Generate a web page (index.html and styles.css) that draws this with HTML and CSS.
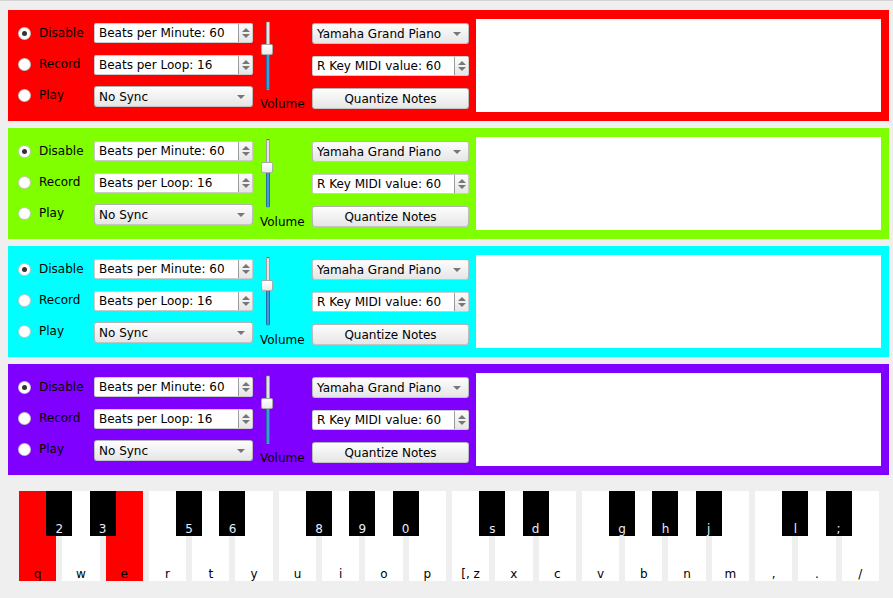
FILE: index.html
```html
<!DOCTYPE html>
<html>
<head>
<meta charset="utf-8">
<link rel="stylesheet" href="styles.css">
</head>
<body>
<div class="panels">
  <div class="panel red">
    <div class="radios">
      <div class="radio"><span class="dot on"></span>Disable</div>
      <div class="radio"><span class="dot"></span>Record</div>
      <div class="radio"><span class="dot"></span>Play</div>
    </div>
    <div class="col col2">
      <div class="spin"><span class="val">Beats per Minute: 60</span><span class="arrows"><i class="up"></i><i class="dn"></i></span></div>
      <div class="spin s2"><span class="val">Beats per Loop: 16</span><span class="arrows"><i class="up"></i><i class="dn"></i></span></div>
      <div class="combo c3"><span>No Sync</span><i class="caret"></i></div>
    </div>
    <div class="slidercol">
      <div class="slider"><div class="groove"></div><div class="handle"></div></div>
      <div class="vol">Volume</div>
    </div>
    <div class="col col3">
      <div class="combo"><span>Yamaha Grand Piano</span><i class="caret"></i></div>
      <div class="spin s2b"><span class="val">R Key MIDI value: 60</span><span class="arrows"><i class="up"></i><i class="dn"></i></span></div>
      <div class="button">Quantize Notes</div>
    </div>
    <div class="textbox"></div>
  </div>

  <div class="panel green">
    <div class="radios">
      <div class="radio"><span class="dot on"></span>Disable</div>
      <div class="radio"><span class="dot"></span>Record</div>
      <div class="radio"><span class="dot"></span>Play</div>
    </div>
    <div class="col col2">
      <div class="spin"><span class="val">Beats per Minute: 60</span><span class="arrows"><i class="up"></i><i class="dn"></i></span></div>
      <div class="spin s2"><span class="val">Beats per Loop: 16</span><span class="arrows"><i class="up"></i><i class="dn"></i></span></div>
      <div class="combo c3"><span>No Sync</span><i class="caret"></i></div>
    </div>
    <div class="slidercol">
      <div class="slider"><div class="groove"></div><div class="handle"></div></div>
      <div class="vol">Volume</div>
    </div>
    <div class="col col3">
      <div class="combo"><span>Yamaha Grand Piano</span><i class="caret"></i></div>
      <div class="spin s2b"><span class="val">R Key MIDI value: 60</span><span class="arrows"><i class="up"></i><i class="dn"></i></span></div>
      <div class="button">Quantize Notes</div>
    </div>
    <div class="textbox"></div>
  </div>

  <div class="panel cyan">
    <div class="radios">
      <div class="radio"><span class="dot on"></span>Disable</div>
      <div class="radio"><span class="dot"></span>Record</div>
      <div class="radio"><span class="dot"></span>Play</div>
    </div>
    <div class="col col2">
      <div class="spin"><span class="val">Beats per Minute: 60</span><span class="arrows"><i class="up"></i><i class="dn"></i></span></div>
      <div class="spin s2"><span class="val">Beats per Loop: 16</span><span class="arrows"><i class="up"></i><i class="dn"></i></span></div>
      <div class="combo c3"><span>No Sync</span><i class="caret"></i></div>
    </div>
    <div class="slidercol">
      <div class="slider"><div class="groove"></div><div class="handle"></div></div>
      <div class="vol">Volume</div>
    </div>
    <div class="col col3">
      <div class="combo"><span>Yamaha Grand Piano</span><i class="caret"></i></div>
      <div class="spin s2b"><span class="val">R Key MIDI value: 60</span><span class="arrows"><i class="up"></i><i class="dn"></i></span></div>
      <div class="button">Quantize Notes</div>
    </div>
    <div class="textbox"></div>
  </div>

  <div class="panel purple">
    <div class="radios">
      <div class="radio"><span class="dot on"></span>Disable</div>
      <div class="radio"><span class="dot"></span>Record</div>
      <div class="radio"><span class="dot"></span>Play</div>
    </div>
    <div class="col col2">
      <div class="spin"><span class="val">Beats per Minute: 60</span><span class="arrows"><i class="up"></i><i class="dn"></i></span></div>
      <div class="spin s2"><span class="val">Beats per Loop: 16</span><span class="arrows"><i class="up"></i><i class="dn"></i></span></div>
      <div class="combo c3"><span>No Sync</span><i class="caret"></i></div>
    </div>
    <div class="slidercol">
      <div class="slider"><div class="groove"></div><div class="handle"></div></div>
      <div class="vol">Volume</div>
    </div>
    <div class="col col3">
      <div class="combo"><span>Yamaha Grand Piano</span><i class="caret"></i></div>
      <div class="spin s2b"><span class="val">R Key MIDI value: 60</span><span class="arrows"><i class="up"></i><i class="dn"></i></span></div>
      <div class="button">Quantize Notes</div>
    </div>
    <div class="textbox"></div>
  </div>
</div>

<div class="keyboard">
  <div class="key pressed">q<div class="black">2</div></div>
  <div class="key">w<div class="black">3</div></div>
  <div class="key pressed">e</div>
  <div class="key">r<div class="black">5</div></div>
  <div class="key">t<div class="black">6</div></div>
  <div class="key">y</div>
  <div class="key">u<div class="black">8</div></div>
  <div class="key">i<div class="black">9</div></div>
  <div class="key">o<div class="black">0</div></div>
  <div class="key">p</div>
  <div class="key">[, z<div class="black">s</div></div>
  <div class="key">x<div class="black">d</div></div>
  <div class="key">c</div>
  <div class="key">v<div class="black">g</div></div>
  <div class="key">b<div class="black">h</div></div>
  <div class="key">n<div class="black">j</div></div>
  <div class="key">m</div>
  <div class="key">,<div class="black">l</div></div>
  <div class="key">.<div class="black">;</div></div>
  <div class="key">/</div>
</div>
</body>
</html>
```

FILE: styles.css
```css
* { box-sizing: border-box; margin: 0; padding: 0; }
html, body { width: 893px; height: 598px; overflow: hidden; }
body {
  background: #efefef;
  font-family: "DejaVu Sans", "Liberation Sans", sans-serif;
  font-size: 12px;
  color: #000;
  border-top: 1px solid #d3d3d3;
}

.panels {
  display: flex;
  flex-direction: column;
  gap: 7px;
  padding: 9px 4px 0 8px;
}
.panel {
  height: 111px;
  display: flex;
  gap: 7px;
  padding: 9px 8px 9px 9px;
}
.red { background: #ff0000; }
.green { background: #80ff00; }
.cyan { background: #00ffff; }
.purple { background: #8000ff; }

.radios {
  width: 70px;
  display: flex;
  flex-direction: column;
  gap: 11px;
  padding: 4px 0 0 1px;
}
.radio {
  height: 20px;
  display: flex;
  align-items: center;
  gap: 8px;
  white-space: nowrap;
}
.dot {
  width: 13px;
  height: 13px;
  border-radius: 50%;
  background: #fff;
  border: 1px solid rgba(0, 0, 0, 0.22);
  display: flex;
  align-items: center;
  justify-content: center;
}
.dot.on::after {
  content: "";
  width: 5px;
  height: 5px;
  border-radius: 50%;
  background: #333;
}

.col {
  display: flex;
  flex-direction: column;
  padding-top: 4px;
}
.col2 { width: 159px; }
.col3 { width: 157px; }
.s2 { margin-top: 12px; }
.c3 { margin-top: 11px; }
.s2b { margin-top: 12px; }

.spin {
  height: 20px;
  display: flex;
  background: #fff;
  border: 1px solid rgba(0, 0, 0, 0.2);
  border-radius: 2px;
}
.spin .val {
  flex: 1;
  padding-left: 4px;
  line-height: 18px;
  white-space: nowrap;
  overflow: hidden;
}
.arrows {
  width: 14px;
  border-left: 1px solid rgba(0, 0, 0, 0.35);
  background: linear-gradient(#fbfbfb, #e6e6e6);
  display: flex;
  flex-direction: column;
  align-items: center;
  justify-content: center;
  gap: 2px;
}
.up {
  width: 0; height: 0;
  border-left: 4px solid transparent;
  border-right: 4px solid transparent;
  border-bottom: 4px solid #777;
}
.dn {
  width: 0; height: 0;
  border-left: 4px solid transparent;
  border-right: 4px solid transparent;
  border-top: 4px solid #777;
}

.combo, .button {
  height: 21px;
  background: linear-gradient(#fdfdfd, #e6e6e6);
  border: 1px solid rgba(0, 0, 0, 0.22);
  border-radius: 3px;
  white-space: nowrap;
}
.combo {
  display: flex;
  align-items: center;
  justify-content: space-between;
  padding: 0 7px 0 4px;
}
.caret {
  width: 0; height: 0;
  border-left: 4px solid transparent;
  border-right: 4px solid transparent;
  border-top: 4px solid #777;
}
.button {
  margin-top: 12px;
  display: flex;
  align-items: center;
  justify-content: center;
}

.slidercol {
  width: 45px;
  display: flex;
  flex-direction: column;
  padding-top: 2px;
}
.slider {
  position: relative;
  width: 14px;
  height: 69px;
}
.groove {
  margin-left: 6px;
  width: 4px;
  height: 69px;
  border-radius: 2px;
  border: 1px solid rgba(0, 0, 0, 0.3);
  background: linear-gradient(#e4e4e4 0 30px, #3b9ce4 30px);
}
.handle {
  position: absolute;
  left: 1px;
  top: 23px;
  width: 12px;
  height: 11px;
  border-radius: 2px;
  border: 1px solid rgba(0, 0, 0, 0.3);
  background: linear-gradient(#ffffff, #ececec);
}
.vol {
  margin-top: 7px;
  line-height: 14px;
}

.textbox {
  flex: 1;
  background: #fff;
}

.keyboard {
  display: flex;
  gap: 6px;
  height: 90px;
  margin: 16px 14px 0 19px;
}
.key {
  position: relative;
  flex: 1;
  background: #fff;
  display: flex;
  align-items: flex-end;
  justify-content: center;
  line-height: 14px;
  padding-bottom: 0;
  white-space: nowrap;
}
.key.pressed { background: #ff0000; }
.black {
  position: absolute;
  z-index: 2;
  top: 0;
  right: -16px;
  width: 26px;
  height: 45px;
  background: #000;
  color: #e4efff;
  display: flex;
  align-items: flex-end;
  justify-content: center;
  line-height: 14px;
}
```
